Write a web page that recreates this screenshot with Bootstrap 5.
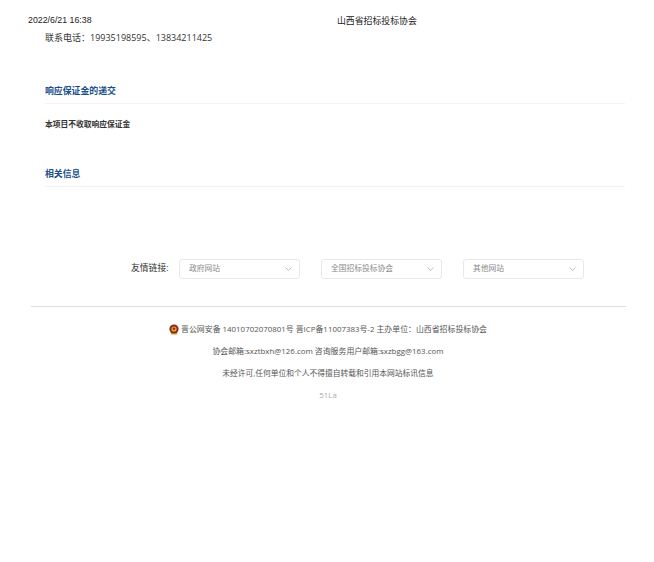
<!DOCTYPE html>
<html lang="zh-CN"><head><meta charset="utf-8"><title>山西省招标投标协会</title>
<link href="https://cdn.jsdelivr.net/npm/bootstrap@5.3.0/dist/css/bootstrap.min.css" rel="stylesheet">
<style>
html,body{background:#fff;}
body{height:562px;overflow:hidden;font-family:"Open Sans","Noto Sans CJK SC",sans-serif;color:#333;}
.print-head{height:15px;margin-top:14px;padding-left:28px;font-size:8.8px;line-height:13px;font-family:"Liberation Sans","Noto Sans CJK SC",sans-serif;color:#222;}
.print-date{width:309px;}
.print-title{font-size:8.9px;line-height:15px;}
.page-area{padding:0 29px 0 45px;}
.phone-line{font-size:9px;line-height:15px;height:15px;margin:0;padding-top:1px;}
.mid-colon{font-family:"Noto Sans CJK TC",sans-serif;}
.sec-head{font-size:8.9px;font-weight:700;color:#1a4f8b;line-height:14px;padding-bottom:5px;border-bottom:1px solid #f3f3f3;margin:0;}
.sec-one{margin-top:40px;}
.sec-two{margin-top:37px;}
.sec-note{font-size:7.75px;font-weight:700;color:#333;line-height:12px;margin:14px 0 0;}
.link-row{margin-top:71px;padding-left:131px;height:21px;}
.link-label{font-size:8.8px;color:#333;width:48px;}
.fake-select{width:121px;height:20px;border:1px solid #e8e8e8;border-radius:3px;font-size:7.75px;color:#8a8a8a;padding:0 7px 0 9px;}
.sel-gap{margin-right:21px;}
.foot-rule{height:1px;background:#dedede;margin:27px 28px 0 31px;}
.foot-area{text-align:center;font-size:7.9px;color:#555;padding-left:2px;}
.foot-area p{margin:0;line-height:12px;}
.foot-area p+p{margin-top:10px;}
.foot-first{margin-top:16px!important;}
.foot-plain{font-size:7.75px;}
.foot-muted{color:#aaa;}
.badge-svg{vertical-align:-3px;}
</style></head><body>
<div class="print-head d-flex"><div class="print-date">2022/6/21 16:38</div><div class="print-title">山西省招标投标协会</div></div>
<div class="page-area">
<p class="phone-line">联系电话<span class="mid-colon">：</span>19935198595、13834211425</p>
<h2 class="sec-head sec-one">响应保证金的递交</h2>
<p class="sec-note">本项目不收取响应保证金</p>
<h2 class="sec-head sec-two">相关信息</h2>
</div>
<div class="link-row d-flex align-items-center">
<span class="link-label">友情链接:</span>
<div class="fake-select sel-gap d-flex align-items-center justify-content-between"><span>政府网站</span><svg width="7" height="4" viewBox="0 0 7 4"><path d="M.6.6 3.5 3.3 6.4.6" fill="none" stroke="#aaa" stroke-width=".8"/></svg></div>
<div class="fake-select sel-gap d-flex align-items-center justify-content-between"><span>全国招标投标协会</span><svg width="7" height="4" viewBox="0 0 7 4"><path d="M.6.6 3.5 3.3 6.4.6" fill="none" stroke="#aaa" stroke-width=".8"/></svg></div>
<div class="fake-select d-flex align-items-center justify-content-between"><span>其他网站</span><svg width="7" height="4" viewBox="0 0 7 4"><path d="M.6.6 3.5 3.3 6.4.6" fill="none" stroke="#aaa" stroke-width=".8"/></svg></div>
</div>
<div class="foot-rule"></div>
<div class="foot-area">
<p class="foot-first"><svg class="badge-svg" width="10" height="11" viewBox="0 0 10 11"><path d="M1.5 8.5h7l-.5 2H2z" fill="#d9a520"/><circle cx="5" cy="5" r="4.6" fill="#8a2a18"/><circle cx="5" cy="5" r="2.6" fill="#e3a93c"/><circle cx="5" cy="4.8" r="1.3" fill="#9c2414"/></svg> 晋公网安备 14010702070801号 晋ICP备11007383号-2 主办单位<span class="mid-colon">：</span>山西省招标投标协会</p>
<p>协会邮箱:sxztbxh@126.com 咨询服务用户邮箱:sxzbgg@163.com</p>
<p class="foot-plain">未经许可,任何单位和个人不得擅自转载和引用本网站标讯信息</p>
<p class="foot-muted">51La</p>
</div>
</body></html>
